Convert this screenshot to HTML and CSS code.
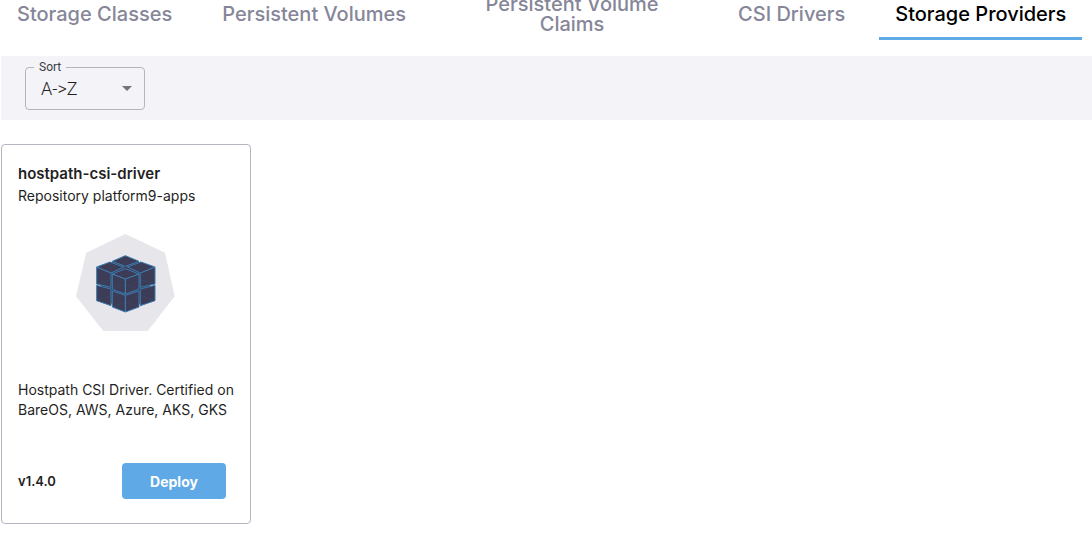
FILE: index.html
```html
<!DOCTYPE html>
<html lang="en">
<head>
  <meta charset="UTF-8">
  <title>Storage Providers</title>
  <link rel="stylesheet" href="styles.css">
</head>
<body>
<nav class="tabs">
  <a class="tab" href="#classes">Storage Classes</a>
  <a class="tab" href="#volumes">Persistent Volumes</a>
  <a class="tab" href="#claims">Persistent Volume Claims</a>
  <a class="tab" href="#drivers">CSI Drivers</a>
  <a class="tab active" href="#providers" aria-current="page">Storage Providers</a>
</nav>
<main class="content">
  <div class="toolbar">
    <fieldset class="field">
      <legend class="field-legend"><label for="sort">Sort</label></legend>
      <div class="field-row">
        <select class="select" id="sort">
          <option>A-&gt;Z</option>
          <option>Z-&gt;A</option>
        </select>
        <svg class="arrow" viewBox="0 0 24 24" aria-hidden="true"><path d="M7 10l5 5 5-5z"/></svg>
      </div>
    </fieldset>
  </div>
  <div class="cards">
    <article class="card">
      <h2 class="card-title">hostpath-csi-driver</h2>
      <p class="card-text">Repository platform9-apps</p>
      <svg class="card-logo" viewBox="33 24 300 297" aria-hidden="true">
        <path fill="#e6e6eb" d="M181 27L300 83L329 214L248 318H115L33 214L64 83z"/>
        <path fill="#3d3c57" d="M181 96L262 126V172L222 240L181 256L142 240L100 172V126z"/>
        <g fill="#3d3c57" stroke="#3b7aae" stroke-width="3" stroke-linejoin="round">
          <path d="M181 92L222 109L181 124L142 109z"/>
          <path d="M95 126L135 111L176 126L138 144V187L95 177z"/>
          <path d="M270 126L228 111L187 126L226 144V187L270 177z"/>
          <path d="M95 181L138 192V242L95 227z"/>
          <path d="M270 181L226 192V242L270 227z"/>
          <path d="M181 131L222 147V193L181 207L142 193V147z"/>
          <path d="M142 198L181 211L222 198V246L181 261L142 246z"/>
        </g>
        <g fill="none" stroke="#3f86bd" stroke-width="3">
          <path d="M95 126L138 144M270 126L226 144M142 147L181 162L222 147M181 162V207M181 211V261"/>
        </g>
        <g fill="none" stroke="#35557c" stroke-width="1">
          <path d="M135 111V165L95 177M228 111V165L270 177M95 227L138 212M270 227L226 212M142 193L181 178L222 193M142 246L181 231L222 246"/>
        </g>
      </svg>
      <p class="card-text">Hostpath CSI Driver. Certified on BareOS, AWS, Azure, AKS, GKS</p>
      <div class="card-footer">
        <span class="version">v1.4.0</span>
        <button class="button" type="button">Deploy</button>
      </div>
    </article>
  </div>
</main>
</body>
</html>
```
FILE: styles.css
```css
* {
    box-sizing: border-box;
}

body {
    margin: 0;
    overflow: hidden;
    background: #fff;
    color: #1f1f24;
    font-family: Inter, "Liberation Sans", sans-serif;
    font-size: 14px;
    line-height: 20px;
}

.tabs {
    display: flex;
    gap: 18px;
    margin-top: -10px;
    padding-left: 1px;
}

.tab {
    flex-shrink: 0;
    display: flex;
    align-items: center;
    justify-content: center;
    max-width: 264px;
    height: 50px;
    padding: 0 16px;
    border-bottom: 3px solid transparent;
    color: #868699;
    font-size: 20px;
    font-weight: 500;
    text-align: center;
    text-decoration: none;
}

.tab.active {
    border-bottom-color: #5fa9e6;
    color: #000;
}

.content {
    padding-left: 1px;
}

.toolbar {
    height: 64px;
    margin-top: 16px;
    padding: 1px 24px;
    background: #f3f3f8;
}

.field {
    width: 120px;
    margin: 0;
    padding: 0 5px 0 8px;
    border: 1px solid #b5b5bd;
    border-radius: 4px;
    font-family: Roboto, sans-serif;
}

.field-legend {
    padding: 0 5px;
    color: #3c3c44;
    font-size: 12px;
}

.field-row {
    display: flex;
    align-items: center;
    height: 32px;
    padding-bottom: 10px;
}

.select {
    flex: 1;
    min-width: 0;
    padding: 0 7px;
    border: 0;
    appearance: none;
    background: transparent;
    color: #1f1f24;
    font-family: inherit;
    font-size: 18px;
    font-weight: 300;
}

.arrow {
    width: 24px;
    height: 24px;
    margin-left: -24px;
    fill: #757575;
    pointer-events: none;
}

.cards {
    display: flex;
    flex-wrap: wrap;
    gap: 24px;
    padding-top: 24px;
}

.card {
    display: flex;
    flex-direction: column;
    width: 250px;
    min-height: 380px;
    padding: 19px 16px 24px;
    border: 1px solid #b5b5c1;
    border-radius: 4px;
}

.card-title {
    margin: 0 0 2px;
    font-size: 15px;
    font-weight: 600;
}

.card-text {
    margin: 0;
}

.card-logo {
    align-self: center;
    width: 100px;
    height: 99px;
    margin: 27px 0 48px;
}

.card-footer {
    display: flex;
    align-items: center;
    justify-content: space-between;
    margin-top: auto;
    padding-right: 8px;
}

.version {
    font-size: 13px;
    font-weight: 600;
}

.button {
    width: 104px;
    height: 36px;
    border: 0;
    border-radius: 4px;
    background: #5fa9e6;
    color: #fff;
    font-family: inherit;
    font-size: 14px;
    font-weight: 700;
}
```
